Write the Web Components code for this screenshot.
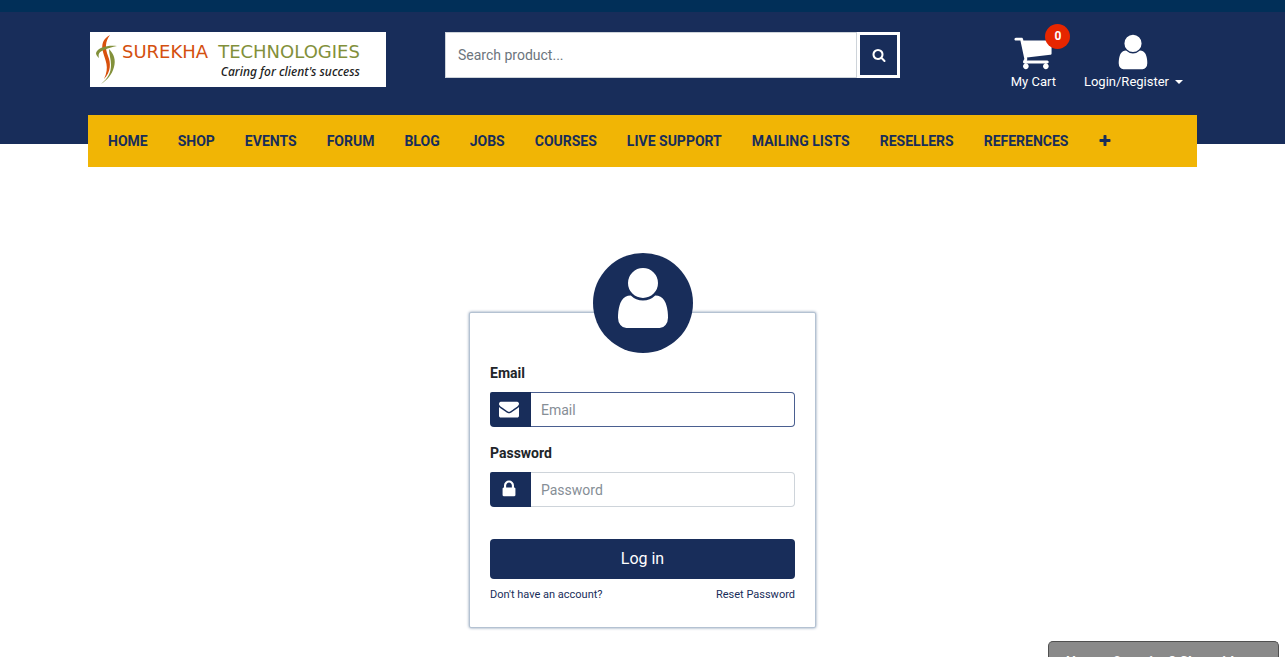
<!DOCTYPE html>
<html lang="en">
<head>
<meta charset="utf-8">
<meta name="viewport" content="width=device-width, initial-scale=1">
<title>Login | Surekha Technologies</title>
<style>
  :root { --navy: #182d5a; --strip: #012f58; --gold: #f1b505; }
  body { margin: 0; background: #fff; color: #212529; font: 14px/20px Roboto, sans-serif; }
</style>
</head>
<body>
<shop-page></shop-page>
<script>
const ICONS = {
  search: 'M1216 832q0-185-131.5-316.5t-316.5-131.5-316.5 131.5-131.5 316.5 131.5 316.5 316.5 131.5 316.5-131.5 131.5-316.5zm512 832q0 52-38 90t-90 38q-54 0-90-38l-343-342q-179 124-399 124-143 0-273.5-55.5t-225-150-150-225-55.5-273.5 55.5-273.5 150-225 225-150 273.5-55.5 273.5 55.5 225 150 150 225 55.5 273.5q0 220-124 399l343 343q37 37 37 90z',
  envelope: 'M1792 710v794q0 66-47 113t-113 47h-1472q-66 0-113-47t-47-113v-794q44 49 101 87 362 246 497 345 57 42 92.5 65.5t94.5 48 110 24.5h2q51 0 110-24.5t94.5-48 92.5-65.5q170-123 498-345 57-39 100-87zm0-294q0 79-49 151t-122 123q-376 261-468 325-10 7-42.5 31t-54 38.5-52 32.5-57.5 27-50 9h-2q-23 0-50-9t-57.5-27-52-32.5-54-38.5-42.5-31q-91-64-262-182.5t-205-142.5q-62-42-117-115.5t-55-136.5q0-78 41.5-130t118.5-52h1472q65 0 112.5 47t47.5 113z',
  lock: 'M640 768h512v-192q0-106-75-181t-181-75-181 75-75 181v192zm832 96v576q0 40-28 68t-68 28h-960q-40 0-68-28t-28-68v-576q0-40 28-68t68-28h32v-192q0-184 132-316t316-132 316 132 132 316v192h32q40 0 68 28t28 68z',
  plus: 'M1600 736v192q0 40-28 68t-68 28h-416v416q0 40-28 68t-68 28h-192q-40 0-68-28t-28-68v-416h-416q-40 0-68-28t-28-68v-192q0-40 28-68t68-28h416v-416q0-40 28-68t68-28h192q40 0 68 28t28 68v416h416q40 0 68 28t28 68z',
  cart: 'M704 1536q0 52-38 90t-90 38-90-38-38-90 38-90 90-38 90 38 38 90zm896 0q0 52-38 90t-90 38-90-38-38-90 38-90 90-38 90 38 38 90zm128-1088v512q0 24-16.5 42.5t-40.5 21.5l-1044 122q13 60 13 70 0 16-24 64h920q26 0 45 19t19 45-19 45-45 19h-1024q-26 0-45-19t-19-45q0-11 8-31.5t16-36 21.5-40 15.5-29.5l-177-823h-204q-26 0-45-19t-19-45 19-45 45-19h256q16 0 28.5 6.5t19.5 15.5 13 24.5 8 26 5.5 29.5 4.5 26h1201q26 0 45 19t19 45z',
  user: 'M1536 1399q0 109-62.5 187t-150.5 78h-854q-88 0-150.5-78t-62.5-187q0-85 8.5-160.5t31.5-152 58.5-131 94-89 134.5-34.5q131 128 313 128t313-128q76 0 134.5 34.5t94 89 58.5 131 31.5 152 8.5 160.5zm-256-887q0 159-112.5 271.5t-271.5 112.5-271.5-112.5-112.5-271.5 112.5-271.5 271.5-112.5 271.5 112.5 112.5 271.5z'
};

function define(name, render) {
  customElements.define(name, class extends HTMLElement {
    constructor() {
      super();
      this.attachShadow({ mode: 'open' });
    }
    connectedCallback() {
      this.shadowRoot.innerHTML = render(this);
    }
  });
}

define('fa-icon', el => `
  <style>
    :host { display: block; width: var(--icon-size, 14px); height: var(--icon-size, 14px); flex: none; }
    svg { display: block; width: 100%; height: 100%; fill: currentColor; }
  </style>
  <svg viewBox="0 0 1792 1792" aria-hidden="true"><path d="${ICONS[el.getAttribute('name')]}"/></svg>`);

define('brand-logo', () => `
  <style>
    :host { display: block; flex: none; }
    a { display: flex; box-sizing: border-box; width: 296px; height: 55px; padding: 2px 6px; gap: 4px; background: #fff; text-decoration: none; }
    svg { display: block; width: 22px; height: 50px; }
    .words { display: flex; flex-direction: column; padding-top: 8px; }
    .name { display: flex; gap: 10px; font: 18px/20px "DejaVu Sans", sans-serif; color: #d4500f; }
    .name span + span { color: #82903a; }
    .tag { align-self: flex-end; font: italic 500 12px/20px "Noto Sans", sans-serif; color: #222; white-space: nowrap; }
  </style>
  <a href="#" aria-label="Surekha Technologies home">
    <svg viewBox="0 0 22 50">
      <path fill="#d8500c" d="M14 1C7 5 5 10 7 18C9 26 14 33 8 45C15 38 15 29 12 22C9 14 9 8 14 1Z"/>
      <path fill="#82903a" d="M21 12C12 11 2 13 0 19C0 21 1 22 3 24C2 20 3 18 8 16C12 14 16 13 21 12Z"/>
      <path fill="#82903a" d="M13 15C18 20 20 26 18 33C16 41 11 46 5 50C12 44 15 39 15 31C15 25 13 20 13 15Z"/>
    </svg>
    <div class="words">
      <div class="name"><span>SUREKHA</span><span>TECHNOLOGIES</span></div>
      <div class="tag">Caring for client's success</div>
    </div>
  </a>`);

define('search-box', () => `
  <style>
    :host { display: block; flex: 0 1 455px; min-width: 0; }
    form { display: flex; height: 46px; margin: 0; background: #fff; }
    input { flex: 1; min-width: 0; box-sizing: border-box; border: 1px solid #ced4da; border-radius: 0; padding: 0 12px; background: #fff; font: inherit; color: #495057; outline: 0; }
    input::placeholder { color: #6c757d; opacity: 1; }
    button { box-sizing: border-box; width: 43px; padding: 0; border: 3px solid #fff; background: var(--navy); color: #fff; display: grid; place-items: center; }
  </style>
  <form role="search">
    <input type="search" placeholder="Search product..." aria-label="Search product">
    <button type="button" aria-label="Search"><fa-icon name="search"></fa-icon></button>
  </form>`);

define('header-action', el => `
  <style>
    :host { display: block; }
    a { display: flex; flex-direction: column; align-items: center; color: #fff; text-decoration: none; font-size: 13px; line-height: 20px; white-space: nowrap; }
    .icon { position: relative; }
    fa-icon { --icon-size: 40px; }
    .badge { position: absolute; left: 32px; top: -8px; width: 25px; height: 25px; border-radius: 50%; background: #e62600; font: bold 12px/25px Roboto, sans-serif; text-align: center; }
    .label { display: flex; align-items: center; gap: 6px; }
    .caret { border: 4px solid transparent; border-top-color: #fff; border-bottom: 0; }
  </style>
  <a href="#">
    <span class="icon"><fa-icon name="${el.getAttribute('icon')}"></fa-icon>${el.hasAttribute('count') ? `<span class="badge">${el.getAttribute('count')}</span>` : ''}</span>
    <span class="label"><slot></slot>${el.hasAttribute('menu') ? '<span class="caret"></span>' : ''}</span>
  </a>`);

define('main-nav', () => `
  <style>
    :host { display: block; background: var(--gold); }
    ul { display: flex; align-items: center; gap: 30px; height: 52px; margin: 0; padding: 0 20px; list-style: none; }
    a { display: block; color: var(--navy); text-decoration: none; font-weight: bold; white-space: nowrap; }
  </style>
  <nav><ul>
    ${['HOME', 'SHOP', 'EVENTS', 'FORUM', 'BLOG', 'JOBS', 'COURSES', 'LIVE SUPPORT', 'MAILING LISTS', 'RESELLERS', 'REFERENCES']
      .map(t => `<li><a href="#">${t}</a></li>`).join('')}
    <li><a href="#" aria-label="More"><fa-icon name="plus"></fa-icon></a></li>
  </ul></nav>`);

define('site-header', () => `
  <style>
    :host { display: block; background: var(--navy); border-top: 12px solid var(--strip); }
    .inner { max-width: 1109px; margin: 0 auto; }
    .row { display: flex; align-items: flex-start; height: 83px; padding: 20px 14px 0 2px; }
    search-box { margin-left: 59px; }
    .actions { display: flex; gap: 28px; margin-left: auto; }
    .nav { height: 29px; }
  </style>
  <header><div class="inner">
    <div class="row">
      <brand-logo></brand-logo>
      <search-box></search-box>
      <div class="actions">
        <header-action icon="cart" count="0">My Cart</header-action>
        <header-action icon="user" menu>Login/Register</header-action>
      </div>
    </div>
    <div class="nav"><main-nav></main-nav></div>
  </div></header>`);

define('icon-field', el => {
  const label = el.getAttribute('label');
  return `
  <style>
    :host { display: block; }
    label { display: block; margin-bottom: 9px; font-weight: bold; }
    .group { display: flex; height: 35px; }
    .addon { display: flex; justify-content: center; box-sizing: border-box; width: 41px; padding: 7px 4px 0 0; background: var(--navy); color: #fff; border-radius: 2px 0 0 4px; }
    fa-icon { --icon-size: 20px; }
    input { flex: 1; min-width: 0; box-sizing: border-box; padding: 0 10px; border: 1px solid #ced4da; border-left: 0; border-radius: 0 4px 4px 0; background: #fff; font: inherit; outline: 0; }
    :host([active]) input { border-color: #4a5f90; }
    input::placeholder { color: #868e96; opacity: 1; }
  </style>
  <label for="field">${label}</label>
  <div class="group">
    <span class="addon"><fa-icon name="${el.getAttribute('icon')}"></fa-icon></span>
    <input id="field" type="${el.getAttribute('type')}" placeholder="${label}">
  </div>`;
});

define('login-card', () => `
  <style>
    :host { display: block; box-sizing: border-box; width: 100%; max-width: 347px; padding: 0 20px 22px; border: 1px solid #b4c2d2; border-radius: 2px; box-shadow: 0 0 3px #8296b0; background: #fff; }
    .avatar { display: grid; justify-content: center; box-sizing: border-box; width: 100px; height: 100px; margin: -60px auto 10px; padding-top: 10px; border-radius: 50%; background: var(--navy); color: #fff; --icon-size: 70px; }
    form { display: grid; gap: 16px; margin: 0; }
    button { height: 40px; margin-top: 16px; padding: 0; border: 0; border-radius: 4px; background: var(--navy); color: #fff; font: 16px/24px Roboto, sans-serif; }
    .links { display: flex; justify-content: space-between; margin-top: 6px; font-size: 11px; line-height: 20px; }
    a { color: var(--navy); text-decoration: none; }
  </style>
  <div class="avatar"><fa-icon name="user"></fa-icon></div>
  <form>
    <icon-field active label="Email" type="email" icon="envelope"></icon-field>
    <icon-field label="Password" type="password" icon="lock"></icon-field>
    <button type="button">Log in</button>
  </form>
  <div class="links"><a href="#">Don't have an account?</a><a href="#">Reset Password</a></div>`);

define('chat-button', () => `
  <style>
    :host { display: block; position: fixed; right: 6px; bottom: -18px; }
    button { box-sizing: border-box; min-width: 231px; height: 34px; padding: 7px 10px 0; border: 1px solid #505050; border-bottom: 0; border-radius: 5px 5px 0 0; background: #8a8a8a; color: #fff; font: bold 14px/20px Roboto, sans-serif; }
  </style>
  <button type="button"><slot></slot></button>`);

define('shop-page', () => `
  <style>
    :host { display: block; }
    main { display: flex; justify-content: center; padding: 168px 16px 28px; }
  </style>
  <site-header></site-header>
  <main><login-card></login-card></main>
  <chat-button>Have a Question? Chat with us.</chat-button>`);
</script>
</body>
</html>
